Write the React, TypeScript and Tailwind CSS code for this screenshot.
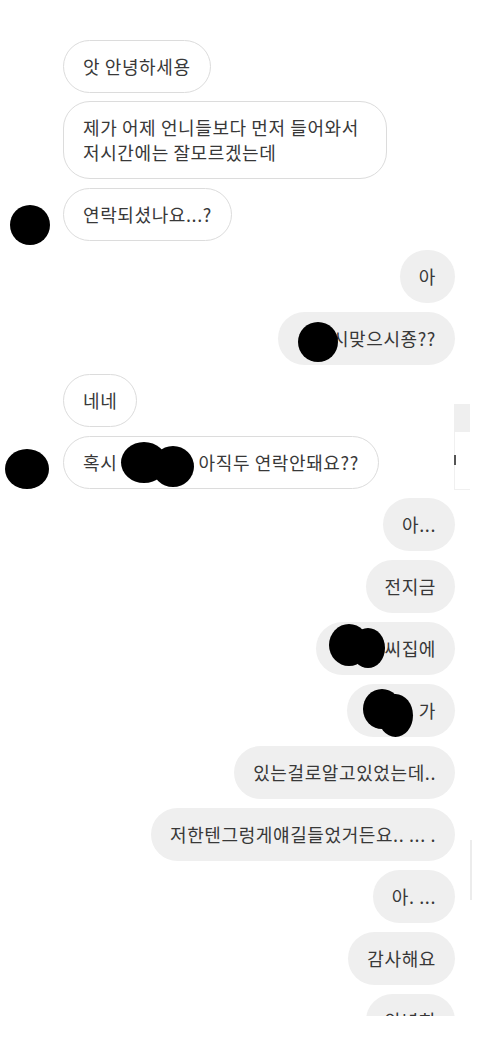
import React from "react";

type Blob = { left: number; top: number; w: number; h: number };

type Msg = {
  side: "in" | "out";
  text: React.ReactNode;
  avatar?: "a" | "b";
  blobs?: Blob[];
  tight?: boolean;
};

const font = { fontFamily: '"Noto Sans CJK KR", "Noto Sans", sans-serif' };

// censor blobs, positioned relative to the bubble's top-left corner
const messages: Msg[] = [
  { side: "in", text: "앗 안녕하세용" },
  {
    side: "in",
    text: (
      <>
        제가 어제 언니들보다 먼저 들어와서
        <br />
        저시간에는 잘모르겠는데
      </>
    ),
    tight: true,
  },
  { side: "in", text: "연락되셨나요...?", avatar: "a" },
  { side: "out", text: "아" },
  {
    side: "out",
    text: (
      <>
        <span className="inline-block w-[35px]" />
        시맞으시죵??
      </>
    ),
    blobs: [{ left: 20, top: 10, w: 40, h: 40 }],
  },
  { side: "in", text: "네네" },
  {
    side: "in",
    text: (
      <>
        혹시 <span className="inline-block w-[72px]" /> 아직두 연락안돼요??
      </>
    ),
    avatar: "b",
    blobs: [
      { left: 57, top: 5, w: 46, h: 41 },
      { left: 88, top: 9, w: 42, h: 41 },
    ],
  },
  { side: "out", text: "아..." },
  { side: "out", text: "전지금" },
  {
    side: "out",
    text: (
      <>
        <span className="inline-block w-[50px]" />
        씨집에
      </>
    ),
    blobs: [
      { left: 13, top: 2, w: 40, h: 42 },
      { left: 35, top: 6, w: 34, h: 40 },
    ],
  },
  {
    side: "out",
    text: (
      <>
        <span className="inline-block w-[53px]" />가
      </>
    ),
    blobs: [
      { left: 16, top: 5, w: 38, h: 40 },
      { left: 31, top: 10, w: 35, h: 43 },
    ],
  },
  { side: "out", text: "있는걸로알고있었는데.." },
  { side: "out", text: "저한텐그렁게얘길들었거든요.. ... ." },
  { side: "out", text: "아. ..." },
  { side: "out", text: "감사해요" },
  { side: "out", text: "안녕히" },
];

function Avatar({ kind }: { kind?: "a" | "b" }) {
  return (
    <div className="flex w-[63px] shrink-0 items-end">
      {kind === "a" && <div className="mb-[-4px] ml-[10px] h-[40px] w-[40px] rounded-full bg-black" />}
      {kind === "b" && <div className="ml-[5px] h-[40px] w-[44px] rounded-[50%] bg-black" />}
    </div>
  );
}

function Bubble({ msg }: { msg: Msg }) {
  const isIn = msg.side === "in";
  return (
    <div className={`flex items-end ${isIn ? "justify-start" : "justify-end pr-[25px]"} ${msg.tight ? "mt-[-1px]" : ""}`}>
      {isIn && <Avatar kind={msg.avatar} />}
      <div
        className={
          isIn
            ? "relative rounded-[27px] border border-[#dcdcdc] bg-white px-[19px] py-[13px] text-[18px] leading-[25px] tracking-[0.6px] text-[#383838]"
            : "relative rounded-[27px] bg-[#efefef] px-[19px] py-[13px] text-[18px] leading-[27px] tracking-[0.6px] text-[#383838]"
        }
      >
        <span className={msg.tight ? "inline-block whitespace-nowrap pr-[8px]" : "whitespace-nowrap"}>{msg.text}</span>
        {msg.blobs?.map((b, i) => (
          <div
            key={i}
            className="absolute rounded-[50%] bg-black"
            style={{ left: b.left, top: b.top, width: b.w, height: b.h }}
          />
        ))}
      </div>
    </div>
  );
}

export default function App() {
  return (
    <div className="relative h-[1046px] w-[480px] overflow-hidden bg-white" style={font}>
      <div className="h-[1016px] overflow-hidden pt-[40px]">
        <div className="flex flex-col gap-[9px]">
          {messages.map((m, i) => (
            <Bubble key={i} msg={m} />
          ))}
        </div>
      </div>

      {/* scrollbar leftovers on the right edge */}
      <div className="absolute left-[454px] top-[404px] h-[28px] w-[16px] bg-[#efefef]" />
      <div className="absolute left-[454px] top-[432px] h-[58px] w-[16px] border-b border-l border-[#f0f0f0] bg-white" />
      <div className="absolute left-[454px] top-[455px] h-[10px] w-[2px] bg-[#555]" />
      <div className="absolute left-[470px] top-[840px] h-[60px] w-[2px] bg-[#ececec]" />
    </div>
  );
}
